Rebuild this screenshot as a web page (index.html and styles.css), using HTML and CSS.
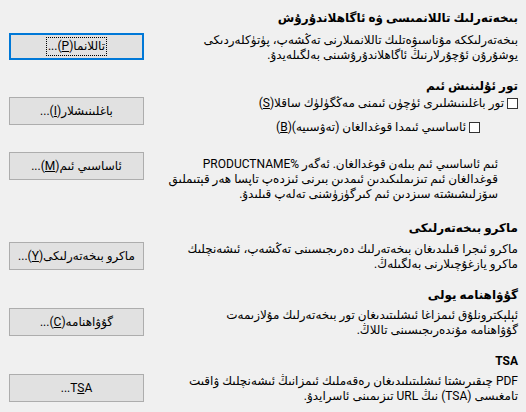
FILE: index.html
```html
<!DOCTYPE html>
<html lang="ug" dir="rtl">
<head>
<meta charset="utf-8">
<title>بىخەتەرلىك</title>
<link rel="stylesheet" href="styles.css">
</head>
<body>
<div class="dialog">
  <section class="sec s1">
    <h2 class="head">بىخەتەرلىك تاللانمىسى ۋە ئاگاھلاندۇرۇش</h2>
    <div class="row">
      <p class="desc">بىخەتەرلىككە مۇناسىۋەتلىك تاللانمىلارنى تەڭشەپ، پۈتۈكلەردىكى<br>يوشۇرۇن ئۇچۇرلارنىڭ ئاگاھلاندۇرۇشىنى بەلگىلەيدۇ.</p>
      <button class="btn btn-focus"><span class="focus-ring">تاللانما(<u>P</u>)...</span></button>
    </div>
  </section>

  <section class="sec s2">
    <h2 class="head">تور ئۇلىنىش ئىم</h2>
    <div class="row row-checks">
      <div class="checks">
        <label class="check"><span class="box"></span><span class="lbl">تور باغلىنىشلىرى ئۈچۈن ئىمنى مەڭگۈلۈك ساقلا(<u>S</u>)</span></label>
        <label class="check check-indent"><span class="box"></span><span class="lbl">ئاساسىي ئىمدا قوغدالغان (تەۋسىيە)(<u>B</u>)</span></label>
      </div>
      <button class="btn btn-conn"><span>باغلىنىشلار(<u>I</u>)...</span></button>
    </div>
    <div class="row row-master">
      <p class="desc desc-indent">ئىم ئاساسىي ئىم بىلەن قوغدالغان. ئەگەر %PRODUCTNAME<br>قوغدالغان ئىم تىزىملىكىدىن ئىمدىن بىرنى ئىزدەپ تاپسا ھەر قېتىملىق<br>سۆزلىشىشتە سىزدىن ئىم كىرگۈزۈشنى تەلەپ قىلىدۇ.</p>
      <button class="btn"><span>ئاساسىي ئىم(<u>M</u>)...</span></button>
    </div>
  </section>

  <section class="sec s3">
    <h2 class="head">ماكرو بىخەتەرلىكى</h2>
    <div class="row">
      <p class="desc">ماكرو ئىجرا قىلىدىغان بىخەتەرلىك دەرىجىسىنى تەڭشەپ، ئىشەنچلىك<br>ماكرو يازغۇچىلارنى بەلگىلەڭ.</p>
      <button class="btn"><span>ماكرو بىخەتەرلىكى(<u>Y</u>)...</span></button>
    </div>
  </section>

  <section class="sec s4">
    <h2 class="head">گۇۋاھنامە يولى</h2>
    <div class="row">
      <p class="desc">ئېلېكترونلۇق ئىمزاغا ئىشلىتىدىغان تور بىخەتەرلىك مۇلازىمەت<br>گۇۋاھنامە مۇندەرىجىسىنى تاللاڭ.</p>
      <button class="btn"><span>گۇۋاھنامە(<u>C</u>)...</span></button>
    </div>
  </section>

  <section class="sec s5">
    <h2 class="head">TSA</h2>
    <div class="row">
      <p class="desc">PDF چىقىرىشتا ئىشلىتىلىدىغان رەقەملىك ئىمزانىڭ ئىشەنچلىك ۋاقىت<br>تامغىسى (TSA) نىڭ URL تىزىمىنى ئاسرايدۇ.</p>
      <button class="btn"><span>T<u>S</u>A<span class="dots">...</span></span></button>
    </div>
  </section>
</div>
</body>
</html>
```

FILE: styles.css
```css
* { box-sizing: border-box; }

html, body {
  margin: 0;
  padding: 0;
}

body {
  width: 526px;
  height: 412px;
  overflow: hidden;
  background: #f0f0f0;
  color: #000;
  font-family: Roboto, "DejaVu Sans", sans-serif;
  font-size: 12px;
  line-height: 15px;
}

.dialog {
  display: flex;
  flex-direction: column;
  padding: 11px 8px 0 9px;
}

.sec {
  display: flex;
  flex-direction: column;
}

.s2 { margin-top: 16px; }
.s3 { margin-top: 19px; }
.s4 { margin-top: 16px; }
.s5 { margin-top: 16px; }

.head {
  margin: 0;
  font-size: 12px;
  line-height: 15px;
  font-weight: bold;
}

.row {
  display: flex;
  align-items: flex-start;
  margin-top: 6px;
}

.s1 .row { margin-top: 7px; }
.s4 .row,
.s5 .row { margin-top: 5px; }

.desc {
  flex: 1;
  margin: 0;
  white-space: nowrap;
}

.btn {
  flex: none;
  width: 135px;
  height: 28px;
  padding: 0;
  border: 1px solid #adadad;
  background: #e1e1e1;
  color: #000;
  font: inherit;
  display: flex;
  align-items: center;
  justify-content: center;
}

.s1 .btn { height: 27px; }

.btn-focus {
  border: 2px solid #0078d7;
}

.focus-ring {
  border: 1px dotted #000;
  padding: 1px 1px;
  line-height: 15px;
}

/* network password section */
.s2 .row-checks { margin-top: 2px; }

.checks {
  flex: 1;
  display: flex;
  flex-direction: column;
  gap: 9px;
}

.check {
  display: flex;
  align-items: center;
  gap: 3px;
  height: 15px;
  white-space: nowrap;
}

.check-indent { margin-right: 38px; }

.box {
  flex: none;
  width: 11px;
  height: 11px;
  background: #fff;
  border: 1px solid #333;
}

.btn-conn { margin-top: 1px; }

.s2 .row-master { margin-top: 17px; }

.desc-indent {
  margin-top: 5px;
  margin-right: 20px;
}
```
